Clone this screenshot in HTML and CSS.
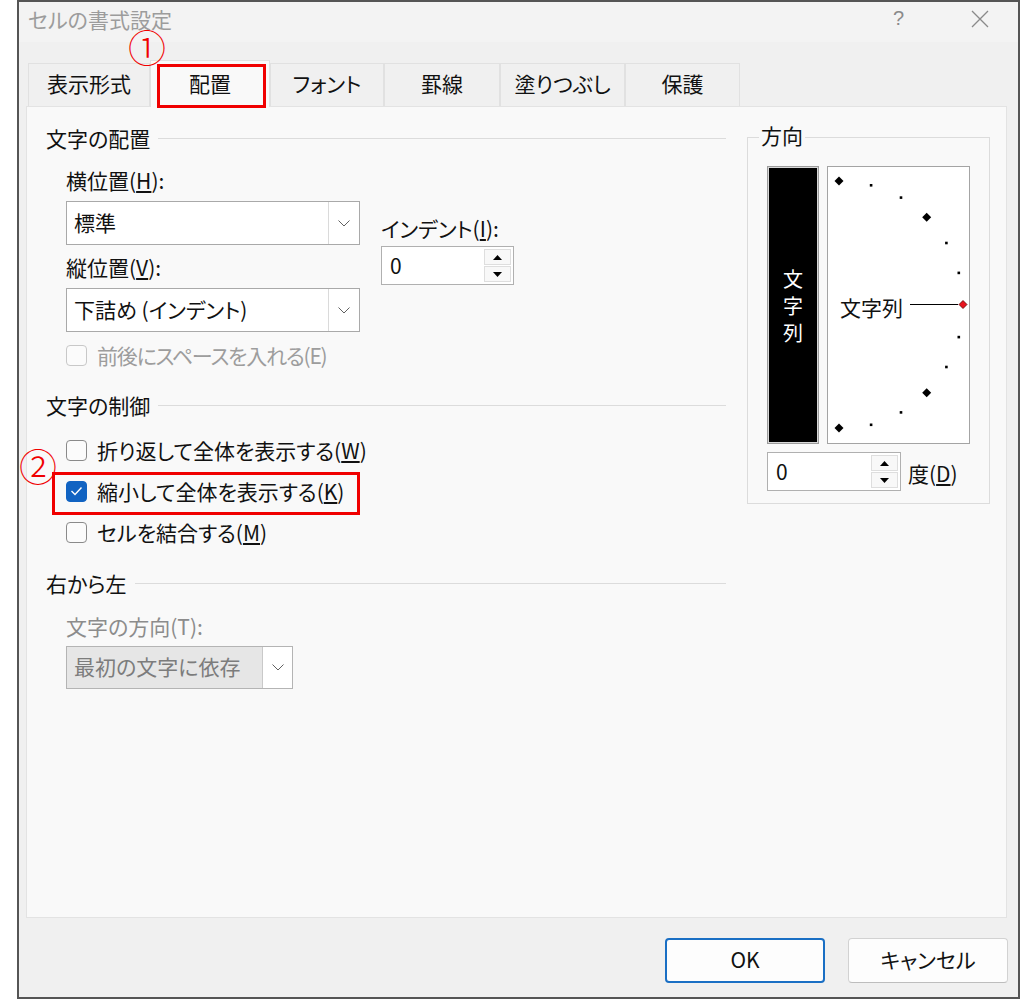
FILE: index.html
```html
<!DOCTYPE html>
<html lang="ja">
<head>
<meta charset="utf-8">
<title>セルの書式設定</title>
<link rel="stylesheet" href="styles.css">
</head>
<body>
<div class="window">
  <div class="titlebar">
    <div class="title">セルの書式設定</div>
    <div class="title-buttons">
      <span class="help">?</span>
      <span class="close">
        <svg width="18" height="18" viewBox="0 0 18 18"><path d="M1 1 L17 17 M17 1 L1 17" stroke="#8a8a8a" stroke-width="1.3" fill="none"/></svg>
      </span>
    </div>
  </div>

  <div class="tabs">
    <div class="tab tab-format">表示形式</div>
    <div class="tab tab-align selected">配置</div>
    <div class="tab tab-font">フォント</div>
    <div class="tab tab-border">罫線</div>
    <div class="tab tab-fill">塗りつぶし</div>
    <div class="tab tab-protect">保護</div>
  </div>

  <div class="panel">
    <div class="left">
      <div class="heading heading-first"><span>文字の配置</span></div>
      <div class="align-row">
        <div class="align-stack">
          <div class="label label-first">横位置(<u>H</u>):</div>
          <div class="select">
            <div class="select-value">標準</div>
            <div class="select-btn"><svg width="12" height="7" viewBox="0 0 12 7"><path d="M0.5 0.5 L6 6 L11.5 0.5" stroke="#606060" stroke-width="1" fill="none"/></svg></div>
          </div>
          <div class="label label-next">縦位置(<u>V</u>):</div>
          <div class="select">
            <div class="select-value">下詰め (インデント)</div>
            <div class="select-btn"><svg width="12" height="7" viewBox="0 0 12 7"><path d="M0.5 0.5 L6 6 L11.5 0.5" stroke="#606060" stroke-width="1" fill="none"/></svg></div>
          </div>
        </div>
        <div class="indent">
          <div class="label">インデント(<u>I</u>):</div>
          <div class="spin">
            <div class="spin-value">0</div>
            <div class="spin-btns">
              <div class="spin-btn"><svg width="9" height="5" viewBox="0 0 9 5"><path d="M0 5 L4.5 0 L9 5 Z" fill="#000"/></svg></div>
              <div class="spin-btn"><svg width="9" height="5" viewBox="0 0 9 5"><path d="M0 0 L4.5 5 L9 0 Z" fill="#000"/></svg></div>
            </div>
          </div>
        </div>
      </div>
      <div class="check-row check-disabled-row disabled">
        <span class="cb cb-disabled"></span>
        <span class="tight">前後にスペースを入れる(E)</span>
      </div>

      <div class="heading heading-ctrl"><span>文字の制御</span></div>
      <div class="check-row check-first">
        <span class="cb"></span>
        <span>折り返して全体を表示する(<u>W</u>)</span>
      </div>
      <div class="check-row check-next">
        <span class="cb checked"><svg width="13" height="10" viewBox="0 0 13 10"><path d="M1.5 5 L5 8.5 L11.5 1.5" stroke="#fff" stroke-width="1.4" fill="none"/></svg></span>
        <span>縮小して全体を表示する(<u>K</u>)</span>
      </div>
      <div class="check-row check-next">
        <span class="cb"></span>
        <span>セルを結合する(<u>M</u>)</span>
      </div>

      <div class="heading heading-rtl"><span>右から左</span></div>
      <div class="label label-dir disabled">文字の方向(T):</div>
      <div class="select select-disabled">
        <div class="select-value">最初の文字に依存</div>
        <div class="select-btn"><svg width="12" height="7" viewBox="0 0 12 7"><path d="M0.5 0.5 L6 6 L11.5 0.5" stroke="#606060" stroke-width="1" fill="none"/></svg></div>
      </div>
    </div>

    <div class="group">
      <div class="group-title"><span>方向</span></div>
      <div class="orient">
        <div class="vertical-box">
          <span>文</span><span>字</span><span>列</span>
        </div>
        <div class="dial">
          <svg width="141" height="276" viewBox="0 0 141 276">
            <g fill="#000">
              <polygon points="11,9.5 15.5,14 11,18.5 6.5,14"/>
              <rect x="41.8" y="17" width="2.6" height="2.6"/>
              <rect x="71.7" y="29.3" width="2.6" height="2.6"/>
              <polygon points="98.7,45.8 103.2,50.3 98.7,54.8 94.2,50.3"/>
              <rect x="117.1" y="74.7" width="2.6" height="2.6"/>
              <rect x="129.5" y="104.6" width="2.6" height="2.6"/>
              <rect x="129.5" y="168.8" width="2.6" height="2.6"/>
              <rect x="117.1" y="198.7" width="2.6" height="2.6"/>
              <polygon points="98.7,221.2 103.2,225.7 98.7,230.2 94.2,225.7"/>
              <rect x="71.7" y="244.1" width="2.6" height="2.6"/>
              <rect x="41.8" y="256.5" width="2.6" height="2.6"/>
              <polygon points="11,256.5 15.5,261 11,265.5 6.5,261"/>
            </g>
            <line x1="82" y1="137.5" x2="130" y2="137.5" stroke="#000" stroke-width="1"/>
            <polygon points="135,133.5 139,137.5 135,141.5 131,137.5" fill="#e8141e" stroke="#5a0000" stroke-width="0.8"/>
            <text x="12" y="140" class="dial-text" dominant-baseline="central">文字列</text>
          </svg>
        </div>
      </div>
      <div class="degree-row">
        <div class="spin spin-degree">
          <div class="spin-value">0</div>
          <div class="spin-btns">
            <div class="spin-btn"><svg width="9" height="5" viewBox="0 0 9 5"><path d="M0 5 L4.5 0 L9 5 Z" fill="#000"/></svg></div>
            <div class="spin-btn"><svg width="9" height="5" viewBox="0 0 9 5"><path d="M0 0 L4.5 5 L9 0 Z" fill="#000"/></svg></div>
          </div>
        </div>
        <span class="degree-label">度(<u>D</u>)</span>
      </div>
    </div>
  </div>

  <div class="buttons">
    <div class="btn btn-default">OK</div>
    <div class="btn">キャンセル</div>
  </div>

  <span class="mark mark1">①</span>
  <div class="hl hl-tab"></div>
  <span class="mark mark2">②</span>
  <div class="hl hl-check"></div>
</div>
</body>
</html>
```

FILE: styles.css
```css
html, body {
  margin: 0;
  padding: 0;
  background: #ffffff;
}

body {
  font-family: "Noto Sans CJK JP", "Noto Sans", sans-serif;
  font-size: 21px;
  color: #111;
  font-feature-settings: "palt";
}

.window {
  position: relative;
  box-sizing: border-box;
  margin-left: 17px;
  width: 1003px;
  height: 999px;
  border: 2px solid #555;
  background: #f0f0f0;
  display: flex;
  flex-direction: column;
}

/* Title bar */
.titlebar {
  height: 40px;
  background: #f3f3f3;
  display: flex;
  align-items: flex-start;
  justify-content: space-between;
}

.title {
  padding-left: 9px;
  padding-top: 6px;
  line-height: 22px;
  color: #9c9c9c;
}

.title-buttons {
  display: flex;
  align-items: center;
  height: 32px;
}

.help {
  color: #8a8a8a;
  font-size: 20px;
  font-family: "Liberation Sans", sans-serif;
  margin-right: 67px;
}

.close {
  display: flex;
  margin-right: 29px;
  margin-top: 2px;
}

/* Tabs */
.tabs {
  display: flex;
  align-items: flex-end;
  padding-left: 9px;
  margin-top: 18px;
  position: relative;
  z-index: 1;
}

.tab {
  box-sizing: border-box;
  height: 43px;
  border: 1px solid #e1e1e1;
  border-bottom: none;
  background: #f0f0f0;
  text-align: center;
  line-height: 38px;
  color: #111;
}

.tab.selected {
  height: 47px;
  margin-bottom: -1px;
  background: #f9f9f9;
  line-height: 44px;
}

.tab-format { width: 122px; }
.tab-align { width: 120px; }
.tab-font { width: 114px; }
.tab-border { width: 116px; }
.tab-fill { width: 125px; }
.tab-protect { width: 115px; }

/* Panel */
.panel {
  box-sizing: border-box;
  margin-left: 7px;
  width: 981px;
  height: 812px;
  border: 1px solid #e3e3e3;
  background: #f9f9f9;
  display: flex;
  align-items: flex-start;
  padding-left: 19px;
}

.left {
  width: 680px;
}

.heading {
  display: flex;
  align-items: flex-start;
  height: 28px;
}

.heading span {
  line-height: 24px;
}

.heading::after {
  content: "";
  flex: 1;
  height: 1px;
  background: #dcdcdc;
  margin-left: 8px;
  margin-top: 12px;
}

.heading-first { margin-top: 19px; }
.heading-ctrl { margin-top: 24px; }
.heading-rtl { margin-top: 25px; }

.label {
  line-height: 24px;
  height: 28px;
}

.align-row {
  display: flex;
  align-items: flex-start;
  padding-left: 20px;
}

.align-stack {
  width: 294px;
}

.label-first { margin-top: 14px; }
.label-next { margin-top: 10px; }

.select {
  box-sizing: border-box;
  display: flex;
  width: 294px;
  height: 44px;
  margin-top: 5px;
  border: 1px solid #a9a9a9;
  background: #ffffff;
}

.select-value {
  flex: 1;
  padding-left: 7px;
  line-height: 40px;
  white-space: nowrap;
}

.select-btn {
  width: 30px;
  border-left: 1px solid #dadada;
  display: flex;
  align-items: center;
  justify-content: center;
  background: #ffffff;
}

.select-disabled {
  width: 227px;
  height: 43px;
  margin-top: 4px;
  margin-left: 20px;
  background: #e6e6e6;
  border-color: #b4b4b4;
  color: #7c7c7c;
}

.select-disabled .select-value {
  line-height: 39px;
}

.select-disabled .select-btn {
  width: 29px;
  border-left: 1px solid #c9c9c9;
}

.indent {
  margin-left: 21px;
  margin-top: 62px;
}

.spin {
  box-sizing: border-box;
  display: flex;
  width: 133px;
  height: 39px;
  margin-top: 2px;
  border: 1px solid #b0b0b0;
  background: #ffffff;
}

.spin-value {
  flex: 1;
  padding-left: 8px;
  line-height: 36px;
}

.spin-btns {
  width: 27px;
  margin: 2px 2px 2px 0;
  display: flex;
  flex-direction: column;
  gap: 1px;
}

.spin-btn {
  flex: 1;
  box-sizing: border-box;
  border: 1px solid #dedede;
  background: #f8f8f8;
  display: flex;
  align-items: center;
  justify-content: center;
}

/* Checkboxes */
.check-row {
  display: flex;
  align-items: center;
  height: 28px;
  line-height: 26px;
  padding-left: 20px;
  gap: 10px;
}

.check-disabled-row { margin-top: 9px; }
.check-first { margin-top: 15px; }
.check-next { margin-top: 13px; }

.tight {
  letter-spacing: -1.2px;
}

.cb {
  box-sizing: border-box;
  width: 21px;
  height: 21px;
  border: 1px solid #8a8a8a;
  border-radius: 4px;
  background: #fbfbfb;
  display: flex;
  align-items: center;
  justify-content: center;
  flex: none;
}

.cb.checked {
  background: #1163c2;
  border-color: #1163c2;
}

.cb-disabled {
  border-color: #c8c8c8;
}

.disabled {
  color: #9d9d9d;
}

.label-dir {
  margin-top: 15px;
  padding-left: 20px;
  color: #8c8c8c;
}

/* Orientation group */
.group {
  box-sizing: border-box;
  width: 243px;
  margin-left: 21px;
  margin-top: 30px;
  border: 1px solid #dcdcdc;
  padding: 0 19px 12px 19px;
}

.group-title {
  margin-top: -15px;
  margin-left: -8px;
  line-height: 24px;
  height: 28px;
}

.group-title span {
  background: #f9f9f9;
  padding: 0 2px;
}

.orient {
  display: flex;
  gap: 8px;
  margin-top: 15px;
}

.vertical-box {
  box-sizing: border-box;
  width: 52px;
  height: 278px;
  border: 1px solid #9c9c9c;
  box-shadow: inset 0 0 0 1px #d8d8d8;
  background: #000;
  color: #fff;
  display: flex;
  flex-direction: column;
  align-items: center;
  justify-content: center;
  line-height: 27px;
  font-size: 20px;
}

.dial {
  box-sizing: border-box;
  width: 143px;
  height: 278px;
  border: 1px solid #a4a4a4;
  background: #ffffff;
  display: flex;
}

.dial-text {
  font-family: "Noto Sans CJK JP", sans-serif;
  font-size: 21px;
  fill: #111;
}

.degree-row {
  display: flex;
  align-items: center;
  margin-top: 6px;
  gap: 7px;
}

.spin-degree {
  width: 134px;
}

.degree-label {
  line-height: 24px;
  padding-top: 4px;
}

/* Bottom buttons */
.buttons {
  display: flex;
  justify-content: flex-end;
  gap: 23px;
  padding-top: 20px;
  padding-right: 10px;
}

.btn {
  box-sizing: border-box;
  width: 160px;
  height: 45px;
  border: 1px solid #d2d2d2;
  border-bottom-color: #bdbdbd;
  border-radius: 4px;
  background: #fdfdfd;
  text-align: center;
  line-height: 40px;
  color: #111;
}

.btn-default {
  border: 2px solid #1a6fc4;
  line-height: 38px;
}

/* Annotations */
.mark {
  position: absolute;
  z-index: 5;
  color: #f00000;
  font-size: 38px;
  font-weight: 300;
  line-height: 32px;
  font-feature-settings: normal;
}

.mark1 {
  left: 109px;
  top: 28px;
}

.mark2 {
  left: 0px;
  top: 447px;
}

.hl {
  position: absolute;
  z-index: 5;
  box-sizing: border-box;
  border: 3px solid #f00000;
}

.hl-tab {
  left: 138px;
  top: 62px;
  width: 109px;
  height: 44px;
}

.hl-check {
  left: 33px;
  top: 470px;
  width: 308px;
  height: 43px;
}
```
